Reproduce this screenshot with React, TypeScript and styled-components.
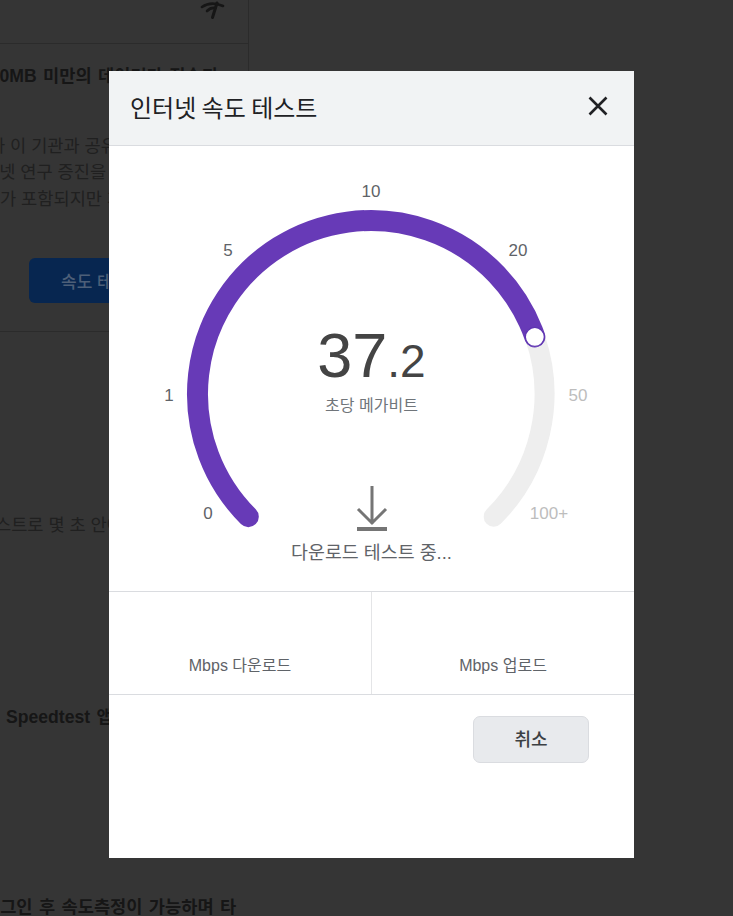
import React from 'react';
import styled, { createGlobalStyle } from 'styled-components';

const Global = createGlobalStyle`
  html, body { margin: 0; padding: 0; height: 100%; background: #353535; }
  body { font-family: "Liberation Sans", "Noto Sans CJK KR", Arial, sans-serif; overflow: hidden; }
`;

const Page = styled.div`
  width: 733px;
  height: 916px;
  overflow: hidden;
  background: #353535;
`;

const Panel = styled.section`
  width: 249px;
  height: 332px;
  box-sizing: border-box;
  border-right: 1px solid #2b2b2b;
  border-bottom: 1px solid #2b2b2b;
`;

const PanelHeader = styled.header`
  height: 44px;
  box-sizing: border-box;
  border-bottom: 1px solid #2b2b2b;
  padding-left: 199px;
`;

const PanelBody = styled.div`
  height: 287px;
  padding-top: 19px;
  box-sizing: border-box;
  overflow: hidden;
`;

const Line = styled.p<{ $bold?: boolean; $indent: number; $gap?: number }>`
  margin: ${(p) => p.$gap ?? 0}px 0 0 ${(p) => p.$indent}px;
  font-size: 17.6px;
  line-height: 26.5px;
  white-space: nowrap;
  word-spacing: ${(p) => (p.$bold ? '1.5px' : '0')};
  color: ${(p) => (p.$bold ? '#161616' : '#202020')};
  font-weight: ${(p) => (p.$bold ? 700 : 400)};
`;

const PageButton = styled.button`
  display: block;
  width: 180px;
  height: 45px;
  margin: 46px 0 0 29px;
  padding: 0 0 0 32px;
  border: 0;
  border-radius: 6px;
  background: #072650;
  color: #4d5f78;
  font: 500 17px "Liberation Sans", "Noto Sans CJK KR", sans-serif;
  text-align: left;
`;

const Modal = styled.div`
  position: fixed;
  left: 109px;
  top: 71px;
  width: 525px;
  height: 787px;
  background: #fff;
  display: flex;
  flex-direction: column;
`;

const ModalHeader = styled.header`
  height: 75px;
  flex: none;
  box-sizing: border-box;
  background: #f1f3f4;
  border-bottom: 1px solid #dadce0;
  display: flex;
  align-items: center;
  justify-content: space-between;
  padding: 0 25px 4px 21px;
`;

const Title = styled.h2`
  margin: 0;
  font-size: 24px;
  font-weight: 400;
  color: #202124;
  font-family: "Noto Sans CJK KR", sans-serif;
`;

const CloseButton = styled.button`
  width: 22px;
  height: 22px;
  padding: 0;
  border: 0;
  background: none;
  display: flex;
`;

const GaugeArea = styled.div`
  position: relative;
  height: 445px;
  flex: none;
`;

const GaugeSvg = styled.svg`
  display: block;
`;

const Tick = styled.text<{ $dim?: boolean }>`
  font-size: 17px;
  text-anchor: middle;
  fill: ${(p) => (p.$dim ? '#bdbdbd' : '#5f6368')};
`;

const Readout = styled.div`
  position: absolute;
  left: 0;
  right: 0;
  top: 171px;
  display: flex;
  flex-direction: column;
  align-items: center;
`;

const Speed = styled.div`
  display: flex;
  align-items: baseline;
  color: #444;
  font-size: 63px;
  line-height: 76px;
`;

const Fraction = styled.span`
  font-size: 46px;
`;

const Unit = styled.div`
  font-size: 16px;
  line-height: 20px;
  color: #70757a;
  margin-top: -3px;
`;

const Status = styled.div`
  position: absolute;
  left: 0;
  right: 0;
  top: 339px;
  display: flex;
  flex-direction: column;
  align-items: center;
  color: #5f6368;
  font-size: 18.4px;
  line-height: 24px;
`;

const StatusLabel = styled.span`
  margin-top: 10px;
`;

const Metrics = styled.div`
  height: 104px;
  flex: none;
  box-sizing: border-box;
  border-top: 1px solid #dadce0;
  border-bottom: 1px solid #dadce0;
  display: grid;
  grid-template-columns: 263px 1fr;
`;

const Metric = styled.div<{ $divided?: boolean }>`
  display: flex;
  align-items: flex-end;
  justify-content: center;
  padding-bottom: 18px;
  font-size: 16px;
  line-height: 20px;
  color: #5f6368;
  border-right: ${(p) => (p.$divided ? '1px solid #e4e5e7' : '0')};
`;

const Footer = styled.footer`
  display: flex;
  justify-content: flex-end;
  padding: 21px 45px 0 0;
`;

const CancelButton = styled.button`
  width: 116px;
  height: 47px;
  padding: 0 0 3px;
  border: 1px solid #dadce0;
  border-radius: 7px;
  background: #e8eaed;
  color: #3c4043;
  font: 500 18px "Noto Sans CJK KR", sans-serif;
`;

const cx = 262;
const cy = 248;
const r = 173.5;
const pt = (deg: number) => {
  const a = (deg * Math.PI) / 180;
  return [cx + r * Math.cos(a), cy + r * Math.sin(a)].map((v) => v.toFixed(2)).join(' ');
};
const handleDeg = -19.2;

export default function App() {
  return (
    <>
      <Global />
      <Page>
        <Panel>
          <PanelHeader>
            <svg width="28" height="20" viewBox="0 0 28 20" fill="none" stroke="#161616" strokeLinecap="round">
              <path d="M3 7 C8 3.5 15 2 24 6" strokeWidth="2.6" />
              <path d="M8 11 C10.5 8.5 13 7.5 16 8" strokeWidth="2.6" />
              <path d="M18 3 L13.5 17.5" strokeWidth="3" />
            </svg>
          </PanelHeader>
          <PanelBody>
            <Line $bold $indent={-20}>100MB 미만의 데이터가 전송되</Line>
            <Line $indent={-11} $gap={43}>가 이 기관과 공유됩니다</Line>
            <Line $indent={-17}>터넷 연구 증진을 위해</Line>
            <Line $indent={0}>가 포함되지만 개인</Line>
            <PageButton>속도 테스트</PageButton>
          </PanelBody>
        </Panel>
        <Line $indent={-5} $gap={180}>스트로 몇 초 안에 확인</Line>
        <Line $bold $indent={6} $gap={165}>Speedtest 앱을 사용</Line>
        <Line $bold $indent={-16} $gap={164}>로그인 후 속도측정이 가능하며 타</Line>
        <Modal>
          <ModalHeader>
            <Title>인터넷 속도 테스트</Title>
            <CloseButton aria-label="닫기">
              <svg width="22" height="22" viewBox="0 0 22 22" stroke="#202124" strokeWidth="2.6">
                <path d="M2.5 2.5 L19.5 19.5 M19.5 2.5 L2.5 19.5" />
              </svg>
            </CloseButton>
          </ModalHeader>
          <GaugeArea>
            <GaugeSvg width="525" height="445" viewBox="0 0 525 445" fill="none">
              <path d={`M ${pt(handleDeg)} A ${r} ${r} 0 0 1 ${pt(45)}`} stroke="#eeeeee" strokeWidth="20" strokeLinecap="round" />
              <path d={`M ${pt(135)} A ${r} ${r} 0 1 1 ${pt(handleDeg)}`} stroke="#673ab7" strokeWidth="21" strokeLinecap="round" />
              <circle cx={cx + r * Math.cos((handleDeg * Math.PI) / 180)} cy={cy + r * Math.sin((handleDeg * Math.PI) / 180)} r="9.5" fill="#fff" stroke="#5e35b1" strokeWidth="1.3" />
              <Tick x="99" y="373">0</Tick>
              <Tick x="60" y="255">1</Tick>
              <Tick x="119" y="110">5</Tick>
              <Tick x="262" y="51">10</Tick>
              <Tick x="409" y="110">20</Tick>
              <Tick x="469" y="255" $dim>50</Tick>
              <Tick x="440" y="373" $dim>100+</Tick>
            </GaugeSvg>
            <Readout>
              <Speed>37<Fraction>.2</Fraction></Speed>
              <Unit>초당 메가비트</Unit>
            </Readout>
            <Status>
              <svg width="32" height="46" viewBox="0 0 32 46" fill="none" stroke="#757575" strokeWidth="3">
                <path d="M16 1 V39 M2 24 L16 38 L30 24" />
                <path d="M1 44 H31" strokeWidth="4" />
              </svg>
              <StatusLabel>다운로드 테스트 중...</StatusLabel>
            </Status>
          </GaugeArea>
          <Metrics>
            <Metric $divided>Mbps 다운로드</Metric>
            <Metric>Mbps 업로드</Metric>
          </Metrics>
          <Footer>
            <CancelButton>취소</CancelButton>
          </Footer>
        </Modal>
      </Page>
    </>
  );
}
